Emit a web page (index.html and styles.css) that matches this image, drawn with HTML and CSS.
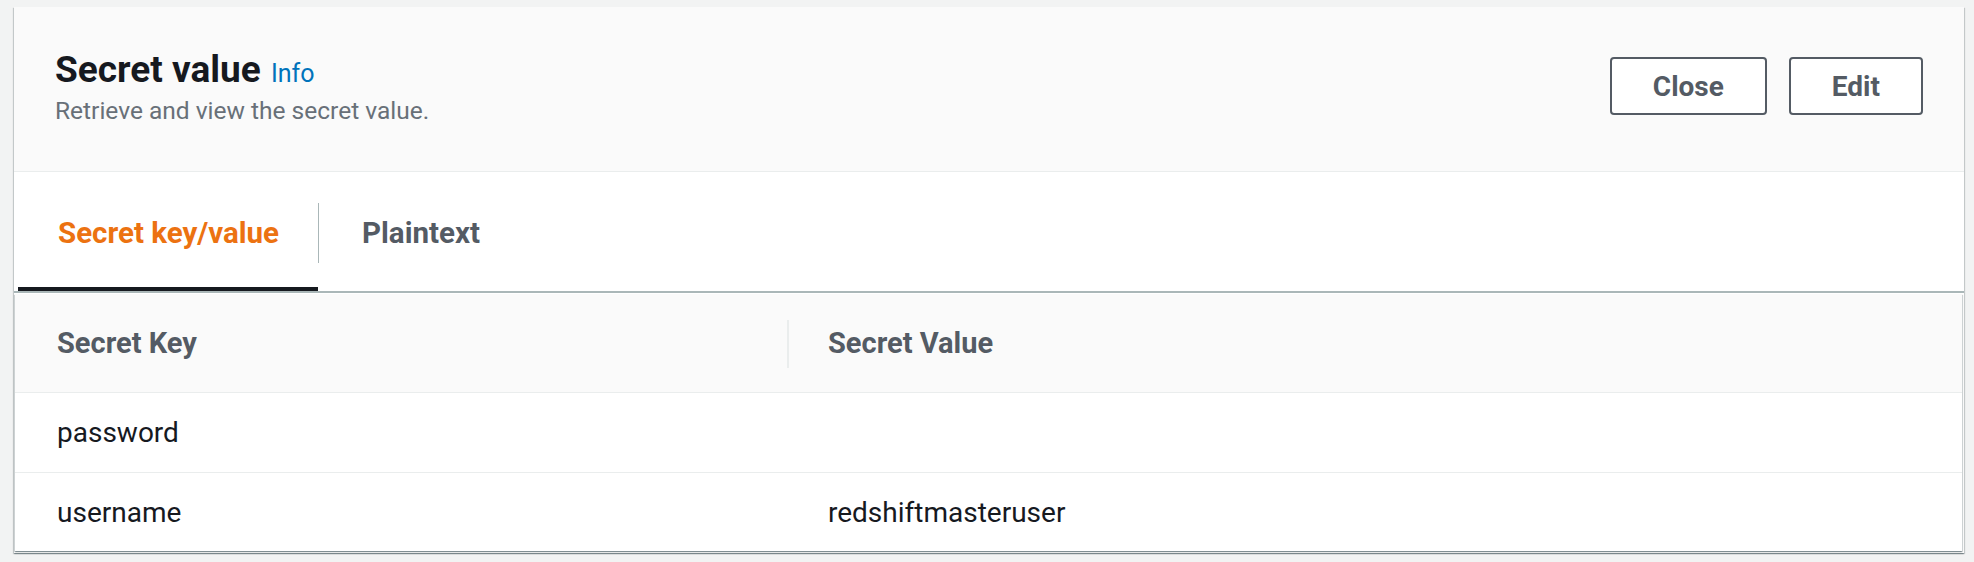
FILE: index.html
```html
<!DOCTYPE html>
<html lang="en">
<head>
<meta charset="utf-8">
<title>Secret value</title>
<link rel="stylesheet" href="styles.css">
</head>
<body>
<div class="card">
  <div class="card-header">
    <div class="heading">
      <h2 class="title">Secret value <a class="info" href="#">Info</a></h2>
      <p class="desc">Retrieve and view the secret value.</p>
    </div>
    <div class="actions">
      <button class="btn btn-close">Close</button>
      <button class="btn btn-edit">Edit</button>
    </div>
  </div>
  <div class="tabs">
    <div class="tab active">Secret key/value</div>
    <span class="tab-sep"></span>
    <div class="tab tab-second">Plaintext</div>
  </div>
  <div class="panel">
    <table class="kv">
      <thead>
        <tr><th class="col-key">Secret Key</th><th class="col-val">Secret Value</th></tr>
      </thead>
      <tbody>
        <tr><td>password</td><td></td></tr>
        <tr class="last"><td>username</td><td>redshiftmasteruser</td></tr>
      </tbody>
    </table>
  </div>
</div>
</body>
</html>
```
FILE: styles.css
```css
html, body {
  margin: 0;
  padding: 0;
}
body {
  background: #f2f3f3;
  font-family: Roboto, "Noto Sans", "Liberation Sans", sans-serif;
  color: #16191f;
  height: 562px;
  overflow: hidden;
}
.card {
  margin: 7px 10px 0 14px;
  background: #fff;
  box-shadow: 0 1px 1px 0 rgba(0, 28, 36, 0.3), 1px 1px 1px 0 rgba(0, 28, 36, 0.15), -1px 1px 1px 0 rgba(0, 28, 36, 0.15);
}
.card-header {
  display: flex;
  justify-content: space-between;
  align-items: flex-start;
  background: #fafafa;
  border-bottom: 1px solid #eaeded;
  padding: 41px 41px 44px 41px;
}
.heading {
  display: flex;
  flex-direction: column;
  gap: 3px;
}
.title {
  margin: 0;
  font-size: 37px;
  line-height: 44px;
  font-weight: 700;
  color: #16191f;
}
.info {
  font-size: 25px;
  line-height: 1;
  font-weight: 400;
  color: #0073bb;
  text-decoration: none;
  margin-left: 1px;
}
.desc {
  margin: 0;
  font-size: 24.5px;
  line-height: 32px;
  color: #687078;
}
.actions {
  display: flex;
  gap: 22px;
  margin-top: 9px;
}
.btn {
  height: 58px;
  padding: 0 41px;
  border: 2px solid #545b64;
  border-radius: 4px;
  background: #fff;
  color: #545b64;
  font-family: Roboto, "Noto Sans", sans-serif;
  font-size: 28px;
  font-weight: 700;
  cursor: pointer;
}
.tabs {
  display: flex;
  align-items: stretch;
  height: 119px;
  padding-left: 4px;
  border-bottom: 2px solid #aab7b8;
}
.tab {
  display: flex;
  align-items: center;
  padding: 6px 39px 0 40px;
  border-bottom: 4px solid transparent;
  font-size: 29.5px;
  font-weight: 700;
  color: #545b64;
}
.tab.tab-second {
  padding-left: 43px;
}
.tab.active {
  color: #ec7211;
  border-bottom-color: #16191f;
}
.tab-sep {
  align-self: center;
  margin-top: 3px;
  width: 1px;
  height: 60px;
  background: #aab7b8;
}
.panel {
  margin: 1px 2px 0 1px;
  padding-bottom: 2px;
}
.kv {
  width: 100%;
  border-collapse: collapse;
  box-shadow: 0 1px 1px 0 rgba(0, 28, 36, 0.3), 1px 1px 1px 0 rgba(0, 28, 36, 0.15), -1px 1px 1px 0 rgba(0, 28, 36, 0.15);
  background: #fff;
}
.kv th {
  height: 98px;
  padding: 0 0 0 42px;
  text-align: left;
  background: #fafafa;
  border-bottom: 1px solid #eaeded;
  color: #545b64;
  font-size: 29px;
  font-weight: 700;
}
.kv th.col-key {
  width: 730px;
}
.kv th.col-val {
  position: relative;
  padding-left: 41px;
}
.kv th.col-val::before {
  content: "";
  position: absolute;
  left: 0;
  top: 26px;
  width: 2px;
  height: 48px;
  background: #eaeded;
}
.kv td {
  height: 79px;
  padding: 0 0 0 42px;
  font-size: 28px;
  color: #16191f;
  border-bottom: 1px solid #eaeded;
}
.kv td:nth-child(2) {
  padding-left: 41px;
}
.kv tr.last td {
  height: 78px;
  border-bottom: none;
}
```
